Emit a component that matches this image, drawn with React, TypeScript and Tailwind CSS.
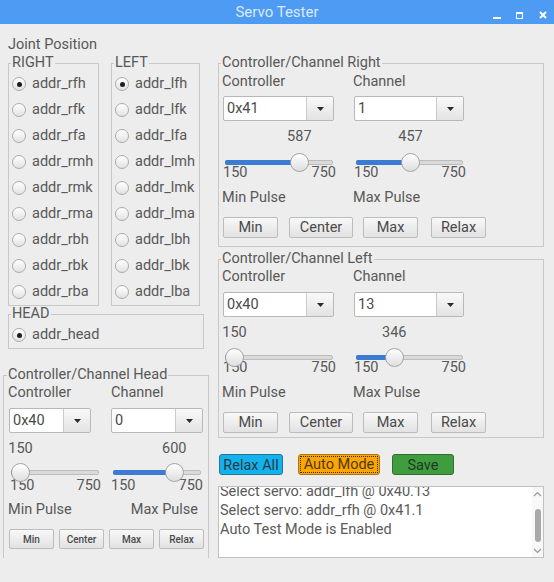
import React from 'react';

// handle radius of the Tk-style scale
const R = 9.5;
const pos = (value: number, width: number) => R + ((value - 150) / 600) * (width - 2 * R);

function Radio({ label, checked = false }: { label: string; checked?: boolean }) {
  return (
    <div className="flex h-[26px] items-center">
      <span className="ml-[3px] flex h-[14px] w-[14px] items-center justify-center rounded-full border border-[#ababab] bg-linear-to-b from-white to-[#e2e2e2]">
        {checked && <span className="h-[5px] w-[5px] rounded-full bg-[#1e1e1e]" />}
      </span>
      <span className="ml-[6px] leading-[18px]">{label}</span>
    </div>
  );
}

function Group({
  title,
  className = '',
  legendClass = 'ml-[2px]',
  children,
}: {
  title: string;
  className?: string;
  legendClass?: string;
  children: React.ReactNode;
}) {
  return (
    <fieldset className={`min-w-0 border border-[#c8c8c8] ${className}`}>
      <legend className={`px-[1px] leading-[16px] ${legendClass}`}>{title}</legend>
      {children}
    </fieldset>
  );
}

function Combo({ value, className }: { value: string; className: string }) {
  return (
    <div className={`flex h-[25px] rounded-[2px] border border-[#b8b8b8] bg-white ${className}`}>
      <span className="flex-1 pl-[3px] leading-[23px] text-[#4a4a4a]">{value}</span>
      <span className="flex w-[27px] items-center justify-center border-l border-[#cacaca] bg-linear-to-b from-[#f9f9f9] to-[#e3e3e3]">
        <svg width="7" height="4" viewBox="0 0 7 4">
          <path d="M0 0H7L3.5 4Z" fill="#2a2a2a" />
        </svg>
      </span>
    </div>
  );
}

function ValueLabel({ value, width, className }: { value: number; width: number; className: string }) {
  return (
    <div className={`relative h-[18px] leading-[18px] ${className}`}>
      <span className="absolute -translate-x-1/2" style={{ left: pos(value, width) }}>
        {value}
      </span>
    </div>
  );
}

function Slider({ value, width, className }: { value: number; width: number; className: string }) {
  const cx = pos(value, width);
  return (
    <div className={`relative z-10 h-[19px] ${className}`}>
      <div className="absolute inset-x-0 top-[7px] h-[5px] rounded-[2px] border border-[#bcbcbc] bg-[#dadada]" />
      <div className="absolute left-0 top-[7px] h-[5px] rounded-l-[2px] bg-[#3b7bd4]" style={{ width: cx }} />
      <div
        className="absolute top-0 h-[19px] w-[19px] rounded-full border border-[#a4a4a4] bg-linear-to-b from-white to-[#dedede]"
        style={{ left: cx - R }}
      />
    </div>
  );
}

function Ticks({ className }: { className: string }) {
  return (
    <div className={`flex h-[16px] justify-between leading-[16px] ${className}`}>
      <span>150</span>
      <span>750</span>
    </div>
  );
}

function Btn({ label, className }: { label: string; className: string }) {
  return (
    <button className={`flex items-center justify-center rounded-[2px] border border-[#bcbcbc] bg-linear-to-b from-[#f8f8f8] to-[#e2e2e2] text-[#4a4a4a] ${className}`}>
      {label}
    </button>
  );
}

function SideGroup({
  title,
  ctrl,
  chan,
  min,
  max,
  tight = false,
}: {
  title: string;
  ctrl: string;
  chan: string;
  min: number;
  max: number;
  tight?: boolean;
}) {
  return (
    <Group title={title} className={tight ? 'mt-[4px] w-[326px] pb-[4px]' : 'w-[326px] pb-[8px]'}>
      <div className={`flex h-[18px] pl-[3px] leading-[18px] ${tight ? 'mt-[1px]' : 'mt-[2px]'}`}>
        <span className="w-[131px]">Controller</span>
        <span>Channel</span>
      </div>
      <div className={`flex pl-[3px] ${tight ? 'mt-[6px]' : 'mt-[5px]'}`}>
        <div className="w-[131px]">
          <Combo value={ctrl} className="ml-[1px] w-[111px]" />
        </div>
        <Combo value={chan} className="ml-[1px] w-[110px]" />
      </div>
      <div className="mt-[7px] flex pl-[3px]">
        <div className="w-[131px]">
          <ValueLabel value={min} width={108} className="ml-[3px] w-[108px]" />
        </div>
        <ValueLabel value={max} width={107} className="ml-[3px] w-[107px]" />
      </div>
      <div className={`flex pl-[3px] ${tight ? 'mt-[6px]' : 'mt-[7px]'}`}>
        <div className="w-[131px]">
          <Slider value={min} width={108} className="ml-[3px] w-[108px]" />
        </div>
        <Slider value={max} width={107} className="ml-[3px] w-[107px]" />
      </div>
      <div className="-mt-[7px] flex pl-[3px]">
        <div className="w-[131px]">
          <Ticks className="ml-[1px] w-[113px]" />
        </div>
        <Ticks className="ml-[1px] w-[112px]" />
      </div>
      <div className="mt-[8px] flex h-[18px] pl-[3px] leading-[18px]">
        <span className="w-[131px]">Min Pulse</span>
        <span>Max Pulse</span>
      </div>
      <div className="mt-[10px] flex pl-[3px]">
        <Btn label="Min" className="ml-[1px] h-[21px] w-[55px]" />
        <Btn label="Center" className="ml-[11px] h-[21px] w-[64px]" />
        <Btn label="Max" className="ml-[10px] h-[21px] w-[55px]" />
        <Btn label="Relax" className="ml-[13px] h-[21px] w-[55px]" />
      </div>
    </Group>
  );
}

const RIGHT = ['addr_rfh', 'addr_rfk', 'addr_rfa', 'addr_rmh', 'addr_rmk', 'addr_rma', 'addr_rbh', 'addr_rbk', 'addr_rba'];
const LEFT = ['addr_lfh', 'addr_lfk', 'addr_lfa', 'addr_lmh', 'addr_lmk', 'addr_lma', 'addr_lbh', 'addr_lbk', 'addr_lba'];

export default function App() {
  return (
    <div className="h-[582px] w-[554px] overflow-hidden bg-[#ededed] font-['Roboto','Liberation_Sans',sans-serif] text-[14.5px] text-[#585858]">
      {/* title bar */}
      <div className="relative flex h-[24px] items-center justify-center bg-[#4d9bf3]">
        <span className="text-[15px] text-[#dce9fc]">Servo Tester</span>
        <div className="absolute right-[7px] top-0 flex h-[24px] items-center">
          <svg width="8" height="16" viewBox="0 0 8 16">
            <rect x="0" y="13" width="8" height="2" fill="#fff" />
          </svg>
          <svg width="7" height="16" viewBox="0 0 7 16" className="ml-[15px]">
            <rect x="0.5" y="8.5" width="6" height="6" fill="none" stroke="#fff" />
            <rect x="0" y="8" width="7" height="2" fill="#fff" />
          </svg>
          <svg width="8" height="16" viewBox="0 0 8 16" className="ml-[16px]">
            <path d="M1 8L7 14M7 8L1 14" stroke="#fff" strokeWidth="2" />
          </svg>
        </div>
      </div>

      <div className="flex items-start">
        {/* left column */}
        <div className="ml-[3px] flex w-[206px] flex-col">
          <div className="mt-[12px] pl-[5px] leading-[17px]">Joint Position</div>
          <div className="mt-[2px] ml-[5px] flex">
            <Group title="RIGHT" className="w-[91px]">
              {RIGHT.map((n, i) => (
                <Radio key={n} label={n} checked={i === 0} />
              ))}
            </Group>
            <Group title="LEFT" className="ml-[12px] w-[89px]">
              {LEFT.map((n, i) => (
                <Radio key={n} label={n} checked={i === 0} />
              ))}
            </Group>
          </div>
          <Group title="HEAD" className="ml-[5px] w-[196px]">
            <Radio label="addr_head" checked />
          </Group>

          <Group title="Controller/Channel Head" legendClass="ml-[3px]" className="mt-[18px] w-[206px] border-b-0 pb-[9px]">
            <div className="mt-[1px] flex h-[18px] pl-[4px] leading-[18px]">
              <span className="w-[103px]">Controller</span>
              <span>Channel</span>
            </div>
            <div className="mt-[6px] flex pl-[4px]">
              <div className="w-[103px]">
                <Combo value="0x40" className="ml-[1px] w-[82px]" />
              </div>
              <Combo value="0" className="w-[92px]" />
            </div>
            <div className="mt-[7px] flex pl-[4px]">
              <div className="w-[103px]">
                <ValueLabel value={150} width={88} className="ml-[3px] w-[88px]" />
              </div>
              <ValueLabel value={600} width={88} className="ml-[2px] w-[88px]" />
            </div>
            <div className="mt-[5px] flex pl-[4px]">
              <div className="w-[103px]">
                <Slider value={150} width={88} className="ml-[3px] w-[88px]" />
              </div>
              <Slider value={600} width={88} className="ml-[2px] w-[88px]" />
            </div>
            <div className="-mt-[4px] flex pl-[4px]">
              <div className="w-[103px]">
                <Ticks className="ml-[2px] w-[91px]" />
              </div>
              <Ticks className="w-[92px]" />
            </div>
            <div className="mt-[7px] flex h-[18px] pl-[4px] leading-[18px]">
              <span className="w-[103px]">Min Pulse</span>
              <span className="w-[87px] text-right">Max Pulse</span>
            </div>
            <div className="mt-[10px] flex gap-[5px] pl-[5px]">
              <Btn label="Min" className="h-[20px] w-[45px] text-[10px] font-medium" />
              <Btn label="Center" className="h-[20px] w-[45px] text-[10px] font-medium" />
              <Btn label="Max" className="h-[20px] w-[45px] text-[10px] font-medium" />
              <Btn label="Relax" className="h-[20px] w-[45px] text-[10px] font-medium" />
            </div>
          </Group>
        </div>

        {/* right column */}
        <div className="mt-[31px] ml-[9px] flex w-[326px] flex-col">
          <SideGroup title="Controller/Channel Right" ctrl="0x41" chan="1" min={587} max={457} />
          <SideGroup title="Controller/Channel Left" ctrl="0x40" chan="13" min={150} max={346} tight />

          <div className="mt-[16px] flex">
            <button className="ml-[1px] h-[21px] w-[64px] rounded-[3px] border border-[#2b7396] bg-[#12b2ef] text-[#2c3a40]">
              Relax All
            </button>
            <button className="ml-[15px] h-[21px] w-[82px] rounded-[3px] border border-[#a8771c] bg-[#ffa502] p-[1px] text-[#4a3a10]">
              <span className="flex h-full w-full items-center justify-center border border-dotted border-[#3a2a00]">Auto Mode</span>
            </button>
            <button className="ml-[12px] h-[21px] w-[62px] rounded-[3px] border border-[#2f6f2f] bg-[#3f9c3f] text-[#1f3a1f]">
              Save
            </button>
          </div>

          <div className="mt-[11px] flex h-[72px] w-[326px] border border-[#c0c0c0] bg-white">
            <div className="flex-1 overflow-hidden pl-[1px]">
              <div className="-mt-[5px] leading-[19px] text-[#5a5a5a]">
                <div>Select servo: addr_lfh @ 0x40.13</div>
                <div>Select servo: addr_rfh @ 0x41.1</div>
                <div>Auto Test Mode is Enabled</div>
              </div>
            </div>
            <div className="flex w-[11px] flex-col items-center bg-[#f8f8f8]">
              <svg width="9" height="6" viewBox="0 0 9 6" className="mt-[4px]">
                <path d="M1 5L4.5 1.5L8 5" fill="none" stroke="#9a9a9a" strokeWidth="1.2" />
              </svg>
              <div className="mt-[12px] h-[33px] w-[6px] rounded-[3px] bg-[#a9a9a9]" />
              <div className="flex-1" />
              <svg width="9" height="6" viewBox="0 0 9 6" className="mb-[3px]">
                <path d="M1 1L4.5 4.5L8 1" fill="none" stroke="#9a9a9a" strokeWidth="1.2" />
              </svg>
            </div>
          </div>
        </div>
      </div>
    </div>
  );
}
